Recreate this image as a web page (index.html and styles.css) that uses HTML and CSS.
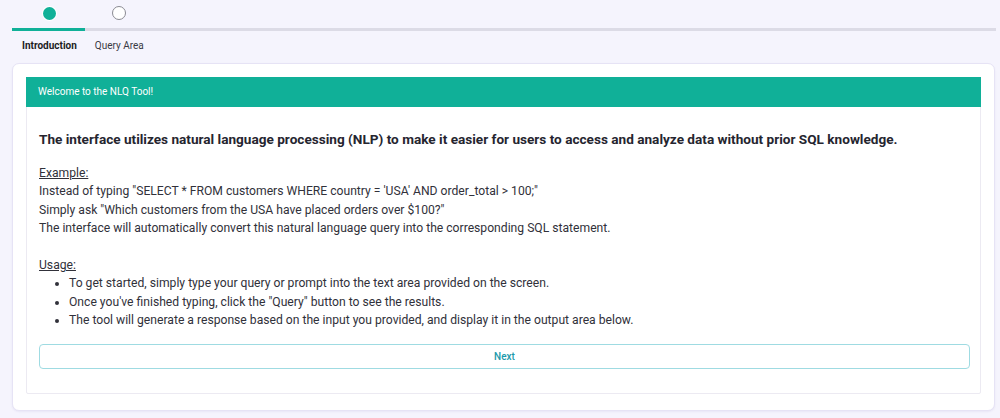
FILE: index.html
```html
<!DOCTYPE html>
<html>
<head>
<meta charset="utf-8">
<link rel="stylesheet" href="styles.css">
</head>
<body>
<div class="stepper">
  <div class="step active">
    <span class="dot"></span>
    <span class="bar"></span>
    <span class="label">Introduction</span>
  </div>
  <div class="step">
    <span class="dot"></span>
    <span class="bar"></span>
    <span class="label">Query Area</span>
  </div>
</div>
<div class="card">
  <div class="panel">
    <div class="panel-head">Welcome to the NLQ Tool!</div>
    <div class="panel-body">
      <h2 class="lead">The interface utilizes natural language processing (NLP) to make it easier for users to access and analyze data without prior SQL knowledge.</h2>
      <p class="sec"><u>Example:</u><br>
      Instead of typing "SELECT * FROM customers WHERE country = 'USA' AND order_total &gt; 100;"<br>
      Simply ask "Which customers from the USA have placed orders over $100?"<br>
      The interface will automatically convert this natural language query into the corresponding SQL statement.</p>
      <p class="sec"><u>Usage:</u></p>
      <ul class="list">
        <li>To get started, simply type your query or prompt into the text area provided on the screen.</li>
        <li>Once you've finished typing, click the "Query" button to see the results.</li>
        <li>The tool will generate a response based on the input you provided, and display it in the output area below.</li>
      </ul>
      <button class="next">Next</button>
    </div>
  </div>
</div>
</body>
</html>
```
FILE: styles.css
```css
html, body { margin: 0; padding: 0; }
body {
  background: #f5f4fd;
  font-family: Roboto, "Liberation Sans", sans-serif;
  width: 1000px;
  height: 418px;
  overflow: hidden;
}
.stepper {
  display: flex;
  margin: 0 4px 0 12px;
  padding-top: 6px;
  background: linear-gradient(#dcdbe6, #dcdbe6) no-repeat 0 28px / 100% 3px;
  height: 57px;
  box-sizing: border-box;
}
.step {
  display: flex;
  flex-direction: column;
  align-items: center;
  padding: 0 8px 0 10px;
}
.dot {
  width: 14px;
  height: 14px;
  border-radius: 50%;
  box-sizing: border-box;
  border: 1.5px solid #8a8a92;
  background: #fff;
}
.step.active .dot {
  background: #10b098;
  border: none;
  width: 13px;
  height: 13px;
  margin: 0.5px 0;
  box-shadow: 0 0 0 1px #fff;
}
.bar {
  align-self: stretch;
  margin: 8px -8px 0 -10px;
  height: 3px;
}
.step.active .bar { background: #10b098; }
.label {
  font-size: 10px;
  line-height: 12px;
  color: #3a3a44;
  margin-top: 9px;
  white-space: nowrap;
}
.step.active .label { font-weight: 700; color: #1c1c24; }
.card {
  margin: 6px 5px 0 12px;
  height: 348px;
  box-sizing: border-box;
  background: #fff;
  border: 1px solid #e6e3f5;
  border-radius: 7px;
  padding: 13px 13px 16px 13px;
  box-shadow: 0 1px 2px rgba(90, 80, 160, 0.08);
}
.panel {
  border: 1px solid #eceaf2;
  border-radius: 2px;
  height: 100%;
  box-sizing: border-box;
}
.panel-head {
  background: #10b098;
  color: #fff;
  font-size: 10px;
  height: 30px;
  line-height: 30px;
  padding-left: 12px;
  margin: -1px -1px 0;
}
.panel-body {
  padding: 0 10px 0 12px;
  color: #31313a;
}
.lead {
  font-size: 13.6px;
  font-weight: 700;
  color: #25252f;
  margin: 22px 0 15px;
  line-height: 20px;
}
.sec {
  font-size: 12.15px;
  line-height: 18.4px;
  margin: 0 0 18.4px;
}
.sec + .sec { margin: 0; }
.list {
  font-size: 12.15px;
  line-height: 18.4px;
  margin: 0;
  padding-left: 30px;
}
.next {
  display: block;
  width: 100%;
  height: 25px;
  margin-top: 14px;
  background: #fff;
  border: 1.5px solid #9fdbe2;
  border-radius: 4px;
  color: #2199ab;
  font-family: Roboto, sans-serif;
  font-weight: 500;
  font-size: 10px;
}
```
